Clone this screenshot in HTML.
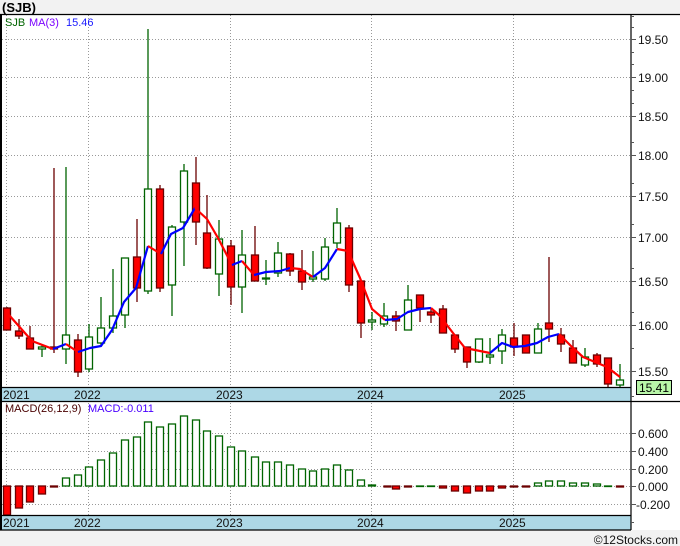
<!DOCTYPE html>
<html><head><meta charset="utf-8"><style>
html,body{margin:0;padding:0;background:#f2f2f2;}
body{width:680px;height:546px;overflow:hidden;position:relative;font-family:"Liberation Sans","DejaVu Sans",sans-serif;}
</style></head><body>
<svg width="680" height="546" xmlns="http://www.w3.org/2000/svg" style="position:absolute;left:0;top:0" font-family="Liberation Sans, DejaVu Sans, sans-serif">
<rect x="0" y="0" width="680" height="546" fill="#f2f2f2"/>
<text x="2" y="12" font-size="13" font-weight="bold" fill="#000">(SJB)</text>
<rect x="0" y="14" width="680" height="516" fill="#fff"/>
<!-- grids -->
<g stroke="#999" stroke-dasharray="1,2" stroke-width="1">
<line x1="2" x2="631" y1="39.5" y2="39.5"/><line x1="2" x2="631" y1="77.5" y2="77.5"/><line x1="2" x2="631" y1="116.5" y2="116.5"/><line x1="2" x2="631" y1="155.5" y2="155.5"/><line x1="2" x2="631" y1="196.5" y2="196.5"/><line x1="2" x2="631" y1="237.5" y2="237.5"/><line x1="2" x2="631" y1="281.5" y2="281.5"/><line x1="2" x2="631" y1="325.5" y2="325.5"/><line x1="2" x2="631" y1="371.5" y2="371.5"/>
<line x1="2" x2="631" y1="433.5" y2="433.5"/><line x1="2" x2="631" y1="451.5" y2="451.5"/><line x1="2" x2="631" y1="469.5" y2="469.5"/><line x1="2" x2="631" y1="486.5" y2="486.5"/><line x1="2" x2="631" y1="504.5" y2="504.5"/>
<line x1="6.5" x2="6.5" y1="15" y2="387"/><line x1="88.5" x2="88.5" y1="15" y2="387"/><line x1="230.5" x2="230.5" y1="15" y2="387"/><line x1="371.5" x2="371.5" y1="15" y2="387"/><line x1="513.5" x2="513.5" y1="15" y2="387"/>
<line x1="6.5" x2="6.5" y1="403" y2="515"/><line x1="88.5" x2="88.5" y1="403" y2="515"/><line x1="230.5" x2="230.5" y1="403" y2="515"/><line x1="371.5" x2="371.5" y1="403" y2="515"/><line x1="513.5" x2="513.5" y1="403" y2="515"/>
</g>
<!-- candles -->
<g stroke-width="1.3">
<g stroke="#6b0000" fill="#f00">
<line x1="7" x2="7" y1="307" y2="330"/><rect x="3.5" y="308" width="7" height="22"/>
<line x1="19" x2="19" y1="319" y2="339"/><rect x="15.5" y="331" width="7" height="5"/>
<line x1="30" x2="30" y1="326" y2="349"/><rect x="26.5" y="338" width="7" height="11"/>
<line x1="54" x2="54" y1="168" y2="353"/><rect x="50.5" y="347" width="7" height="2"/>
<line x1="78" x2="78" y1="334" y2="377"/><rect x="74.5" y="340" width="7" height="32"/>
<line x1="137" x2="137" y1="219" y2="302"/><rect x="133.5" y="257" width="7" height="31"/>
<line x1="160" x2="160" y1="185" y2="292"/><rect x="156.5" y="189" width="7" height="99"/>
<line x1="196" x2="196" y1="157" y2="245"/><rect x="192.5" y="183" width="7" height="39"/>
<line x1="207" x2="207" y1="195" y2="269"/><rect x="203.5" y="233" width="7" height="35"/>
<line x1="231" x2="231" y1="240" y2="305"/><rect x="227.5" y="246" width="7" height="41"/>
<line x1="255" x2="255" y1="226" y2="281"/><rect x="251.5" y="255" width="7" height="26"/>
<line x1="290" x2="290" y1="253" y2="276"/><rect x="286.5" y="254" width="7" height="17"/>
<line x1="302" x2="302" y1="250" y2="290"/><rect x="298.5" y="271" width="7" height="11"/>
<line x1="349" x2="349" y1="225" y2="292"/><rect x="345.5" y="228" width="7" height="57"/>
<line x1="361" x2="361" y1="281" y2="338"/><rect x="357.5" y="281" width="7" height="42"/>
<line x1="396" x2="396" y1="311" y2="331"/><rect x="392.5" y="316" width="7" height="5"/>
<line x1="420" x2="420" y1="295" y2="322"/><rect x="416.5" y="295" width="7" height="13"/>
<line x1="431" x2="431" y1="308" y2="323"/><rect x="427.5" y="312" width="7" height="3"/>
<line x1="443" x2="443" y1="305" y2="333"/><rect x="439.5" y="309" width="7" height="24"/>
<line x1="455" x2="455" y1="335" y2="353"/><rect x="451.5" y="335" width="7" height="14"/>
<line x1="467" x2="467" y1="347" y2="368"/><rect x="463.5" y="347" width="7" height="15"/>
<line x1="514" x2="514" y1="323" y2="356"/><rect x="510.5" y="338" width="7" height="9"/>
<line x1="526" x2="526" y1="335" y2="353"/><rect x="522.5" y="335" width="7" height="18"/>
<line x1="549" x2="549" y1="257" y2="342"/><rect x="545.5" y="323" width="7" height="6"/>
<line x1="561" x2="561" y1="328" y2="352"/><rect x="557.5" y="335" width="7" height="9"/>
<line x1="573" x2="573" y1="340" y2="363"/><rect x="569.5" y="348" width="7" height="15"/>
<line x1="597" x2="597" y1="353" y2="367"/><rect x="593.5" y="355" width="7" height="9"/>
<line x1="608" x2="608" y1="358" y2="387"/><rect x="604.5" y="358" width="7" height="26"/>
</g>
<g stroke="#006400" fill="#fff">
<line x1="42" x2="42" y1="344" y2="357"/><rect x="38.5" y="347" width="7" height="2"/>
<line x1="66" x2="66" y1="167" y2="364"/><rect x="62.5" y="335" width="7" height="14"/>
<line x1="89" x2="89" y1="324" y2="372"/><rect x="85.5" y="337" width="7" height="32"/>
<line x1="101" x2="101" y1="297" y2="347"/><rect x="97.5" y="328" width="7" height="15"/>
<line x1="113" x2="113" y1="269" y2="333"/><rect x="109.5" y="316" width="7" height="12"/>
<line x1="125" x2="125" y1="258" y2="328"/><rect x="121.5" y="258" width="7" height="57"/>
<line x1="148" x2="148" y1="29" y2="294"/><rect x="144.5" y="189" width="7" height="102"/>
<line x1="172" x2="172" y1="225" y2="316"/><rect x="168.5" y="227" width="7" height="58"/>
<line x1="184" x2="184" y1="164" y2="266"/><rect x="180.5" y="171" width="7" height="51"/>
<line x1="219" x2="219" y1="220" y2="296"/><rect x="215.5" y="239" width="7" height="35"/>
<line x1="242" x2="242" y1="230" y2="313"/><rect x="238.5" y="255" width="7" height="32"/>
<line x1="266" x2="266" y1="260" y2="285"/><rect x="262.5" y="278" width="7" height="1"/>
<line x1="278" x2="278" y1="242" y2="277"/><rect x="274.5" y="253" width="7" height="20"/>
<line x1="313" x2="313" y1="251" y2="282"/><rect x="309.5" y="277" width="7" height="2"/>
<line x1="325" x2="325" y1="238" y2="281"/><rect x="321.5" y="247" width="7" height="32"/>
<line x1="337" x2="337" y1="208" y2="248"/><rect x="333.5" y="223" width="7" height="20"/>
<line x1="372" x2="372" y1="312" y2="330"/><rect x="368.5" y="320" width="7" height="2"/>
<line x1="384" x2="384" y1="303" y2="327"/><rect x="380.5" y="316" width="7" height="8"/>
<line x1="408" x2="408" y1="285" y2="330"/><rect x="404.5" y="300" width="7" height="30"/>
<line x1="479" x2="479" y1="339" y2="363"/><rect x="475.5" y="339" width="7" height="23"/>
<line x1="490" x2="490" y1="338" y2="364"/><rect x="486.5" y="355" width="7" height="2"/>
<line x1="502" x2="502" y1="329" y2="364"/><rect x="498.5" y="335" width="7" height="16"/>
<line x1="538" x2="538" y1="323" y2="353"/><rect x="534.5" y="329" width="7" height="24"/>
<line x1="585" x2="585" y1="348" y2="367"/><rect x="581.5" y="357" width="7" height="8"/>
<line x1="620" x2="620" y1="364" y2="387"/><rect x="616.5" y="380" width="7" height="5"/>
</g>
</g>
<!-- MA -->
<g fill="none" stroke-width="2.2" stroke-linejoin="round">
<polyline stroke="#f00" points="9,315 32,341 53,349"/>
<polyline stroke="#00f" points="53,349 66,344"/>
<polyline stroke="#f00" points="66,344 78,352"/>
<polyline stroke="#00f" points="78,352 90,348 101,346 112,330 124,302 136,288 148,246"/>
<polyline stroke="#f00" points="148,246 161,254"/>
<polyline stroke="#00f" points="161,254 171,234 183,228 195,208"/>
<polyline stroke="#f00" points="195,208 207,219 218,238 232,265"/>
<polyline stroke="#00f" points="232,265 242,261"/>
<polyline stroke="#f00" points="242,261 254,275"/>
<polyline stroke="#00f" points="254,275 266,272 280,271 290,268"/>
<polyline stroke="#f00" points="290,268 300,269 313,277"/>
<polyline stroke="#00f" points="313,277 325,268 337,249"/>
<polyline stroke="#f00" points="337,249 348,251 360,278 372,309 385,320"/>
<polyline stroke="#00f" points="385,320 397,319 408,312 420,309 431,308"/>
<polyline stroke="#f00" points="431,308 440,316 453,333 465,348 490,353"/>
<polyline stroke="#00f" points="490,353 502,343 513,347 525,346 537,343 548,337 559,334"/>
<polyline stroke="#f00" points="559,334 572,347 583,357 595,362 607,367 620,377"/>
</g>
<text x="5" y="26" font-size="11" fill="#006400">SJB</text>
<text x="29" y="26" font-size="11" fill="#7a00ff">MA(3)</text>
<text x="66" y="26" font-size="11" fill="#1a1aff">15.46</text>
<!-- MACD bars -->
<g stroke-width="1.3">
<g stroke="#6b0000" fill="#f00">
<rect x="3.5" y="486" width="7" height="29"/><rect x="15.5" y="486" width="7" height="22"/><rect x="26.5" y="486" width="7" height="16"/><rect x="38.5" y="486" width="7" height="8"/><rect x="50.5" y="486" width="7" height="1"/>
<rect x="384" y="486" width="7" height="1"/><rect x="392.5" y="486" width="7" height="3"/><rect x="404.5" y="486" width="7" height="1"/>
<rect x="439.5" y="486" width="7" height="2"/><rect x="451.5" y="486" width="7" height="5"/><rect x="463.5" y="486" width="7" height="7"/><rect x="475.5" y="486" width="7" height="5"/><rect x="486.5" y="486" width="7" height="5"/><rect x="498.5" y="486" width="7" height="2"/><rect x="510.5" y="486" width="7" height="1"/><rect x="522.5" y="486" width="7" height="1"/><rect x="616.5" y="486" width="7" height="1"/>
</g>
<g stroke="#006400" fill="#fff">
<rect x="62.5" y="478" width="7" height="8"/><rect x="74.5" y="475" width="7" height="11"/><rect x="85.5" y="467" width="7" height="19"/><rect x="97.5" y="460" width="7" height="26"/><rect x="109.5" y="453" width="7" height="33"/><rect x="121.5" y="440" width="7" height="46"/><rect x="133.5" y="437" width="7" height="49"/><rect x="144.5" y="422" width="7" height="64"/><rect x="156.5" y="427" width="7" height="59"/><rect x="168.5" y="424" width="7" height="62"/><rect x="180.5" y="416" width="7" height="70"/><rect x="192.5" y="420" width="7" height="66"/><rect x="203.5" y="431" width="7" height="55"/><rect x="215.5" y="436" width="7" height="50"/><rect x="227.5" y="447" width="7" height="39"/><rect x="238.5" y="451" width="7" height="35"/><rect x="251.5" y="457" width="7" height="29"/><rect x="262.5" y="462" width="7" height="24"/><rect x="274.5" y="462" width="7" height="24"/><rect x="286.5" y="465" width="7" height="21"/><rect x="298.5" y="469" width="7" height="17"/><rect x="309.5" y="471" width="7" height="15"/><rect x="321.5" y="469" width="7" height="17"/><rect x="333.5" y="465" width="7" height="21"/><rect x="345.5" y="470" width="7" height="16"/><rect x="357.5" y="480" width="7" height="6"/><rect x="368.5" y="485" width="7" height="1"/><rect x="416.5" y="486" width="7" height="0.5"/><rect x="427.5" y="486" width="7" height="0.5"/>
<rect x="534.5" y="483" width="7" height="3"/><rect x="545.5" y="481" width="7" height="5"/><rect x="557.5" y="481" width="7" height="5"/><rect x="569.5" y="483" width="7" height="3"/><rect x="581.5" y="483" width="7" height="3"/><rect x="593.5" y="484" width="7" height="2"/><rect x="604.5" y="486" width="7" height="0.5"/>
</g>
</g>
<text x="5" y="412" font-size="11" fill="#4a0000">MACD(26,12,9)</text>
<text x="88" y="412" font-size="11" fill="#4a00ff">MACD:-0.011</text>
<!-- axis bands -->
<rect x="0" y="387" width="631" height="15" fill="#add8e6"/>
<rect x="0" y="515" width="631" height="15" fill="#add8e6"/>
<g stroke="#000" stroke-width="1.2">
<line x1="0" x2="631" y1="387.5" y2="387.5"/><line x1="0" x2="680" y1="401.5" y2="401.5"/>
<line x1="0" x2="631" y1="515.5" y2="515.5"/><line x1="0" x2="631" y1="530" y2="530"/>
<line x1="0" x2="680" y1="14.5" y2="14.5"/>
</g>
<line x1="631" x2="631" y1="14" y2="530" stroke="#000" stroke-width="1.2"/>
<line x1="1" x2="1" y1="14" y2="530" stroke="#000" stroke-width="2"/>
<g font-size="12" fill="#111">
<text x="3" y="399">2021</text><text x="74" y="399">2022</text><text x="216" y="399">2023</text><text x="357" y="399">2024</text><text x="499" y="399">2025</text>
<text x="3" y="527">2021</text><text x="74" y="527">2022</text><text x="216" y="527">2023</text><text x="357" y="527">2024</text><text x="499" y="527">2025</text>
</g>
<!-- ticks -->
<g stroke="#555" stroke-width="1">
<line x1="631" x2="636" y1="39.5" y2="39.5"/><line x1="631" x2="636" y1="77.5" y2="77.5"/><line x1="631" x2="636" y1="116.5" y2="116.5"/><line x1="631" x2="636" y1="155.5" y2="155.5"/><line x1="631" x2="636" y1="196.5" y2="196.5"/><line x1="631" x2="636" y1="237.5" y2="237.5"/><line x1="631" x2="636" y1="281.5" y2="281.5"/><line x1="631" x2="636" y1="325.5" y2="325.5"/><line x1="631" x2="636" y1="371.5" y2="371.5"/>
<line x1="631" x2="634" y1="16.5" y2="16.5"/><line x1="631" x2="634" y1="27.5" y2="27.5"/><line x1="631" x2="634" y1="52.5" y2="52.5"/><line x1="631" x2="634" y1="64.5" y2="64.5"/><line x1="631" x2="634" y1="90.5" y2="90.5"/><line x1="631" x2="634" y1="103.5" y2="103.5"/><line x1="631" x2="634" y1="142.5" y2="142.5"/><line x1="631" x2="634" y1="183.5" y2="183.5"/><line x1="631" x2="634" y1="224.5" y2="224.5"/><line x1="631" x2="634" y1="268.5" y2="268.5"/><line x1="631" x2="634" y1="312.5" y2="312.5"/><line x1="631" x2="634" y1="348.5" y2="348.5"/><line x1="631" x2="634" y1="396.5" y2="396.5"/>
<line x1="631" x2="636" y1="433.5" y2="433.5"/><line x1="631" x2="636" y1="451.5" y2="451.5"/><line x1="631" x2="636" y1="469.5" y2="469.5"/><line x1="631" x2="636" y1="486.5" y2="486.5"/><line x1="631" x2="636" y1="504.5" y2="504.5"/><line x1="631" x2="634" y1="522.5" y2="522.5"/>
</g>
<g font-size="12" fill="#111">
<text x="638" y="44">19.50</text><text x="638" y="82">19.00</text><text x="638" y="121">18.50</text><text x="638" y="160">18.00</text><text x="638" y="201">17.50</text><text x="638" y="242">17.00</text><text x="638" y="286">16.50</text><text x="638" y="330">16.00</text><text x="638" y="376">15.50</text>
<text x="638" y="438">0.600</text><text x="638" y="456">0.400</text><text x="638" y="474">0.200</text><text x="638" y="491">0.000</text><text x="636" y="509">-0.200</text>
</g>
<rect x="636.5" y="380.5" width="35" height="14" fill="#b8f5a8" stroke="#000" stroke-width="1"/>
<text x="639" y="392" font-size="12" fill="#000">15.41</text>
<rect x="0" y="531" width="680" height="15" fill="#f2f2f2"/>
<text x="678" y="544" font-size="12" fill="#111" text-anchor="end">©12Stocks.com</text>
</svg>
</body></html>
